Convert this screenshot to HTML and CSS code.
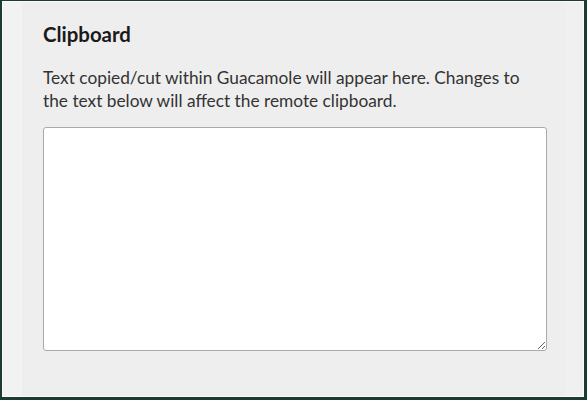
FILE: index.html
```html
<!DOCTYPE html>
<html>
<head>
<meta charset="utf-8">
<link rel="stylesheet" href="styles.css">
</head>
<body>
<div class="frame">
  <div class="panel">
    <div class="content">
      <h3 class="title">Clipboard</h3>
      <p class="desc">Text copied/cut within Guacamole will appear here. Changes to the text below will affect the remote clipboard.</p>
      <textarea class="clip"></textarea>
    </div>
  </div>
</div>
</body>
</html>
```
FILE: styles.css
```css
html, body {
  margin: 0;
  padding: 0;
  width: 587px;
  height: 400px;
  overflow: hidden;
  background: #1e3b32;
}
.frame {
  box-sizing: border-box;
  width: 587px;
  height: 400px;
  border-top: 1px solid #1e3b32;
  border-left: 2px solid #1e3b32;
  border-right: 3px solid #1e3b32;
  border-bottom: 3px solid #1e3b32;
}
.panel {
  box-sizing: border-box;
  height: 100%;
  border: 1px solid #fafafa;
  background: linear-gradient(to right, #f2f2f2 0, #f2f2f2 19px, #eeeeee 19px, #eeeeee calc(100% - 18px), #f0f0f0 calc(100% - 18px));
  padding: 0 0 0 40px;
}
.content {
  font-family: Lato, "Noto Sans", sans-serif;
  color: #222;
  width: 504px;
}
.title {
  margin: 0;
  padding-top: 20px;
  font-size: 20.4px;
  font-weight: bold;
  line-height: 24px;
  color: #1a1a1a;
}
.desc {
  margin: 20px 0 0 0;
  font-size: 17.3px;
  line-height: 23px;
  color: #333;
}
.clip {
  display: block;
  box-sizing: border-box;
  margin-top: 15px;
  width: 504px;
  height: 224px;
  border: 1px solid #aaaaaa;
  border-radius: 3px;
  background: #fff;
}
```
